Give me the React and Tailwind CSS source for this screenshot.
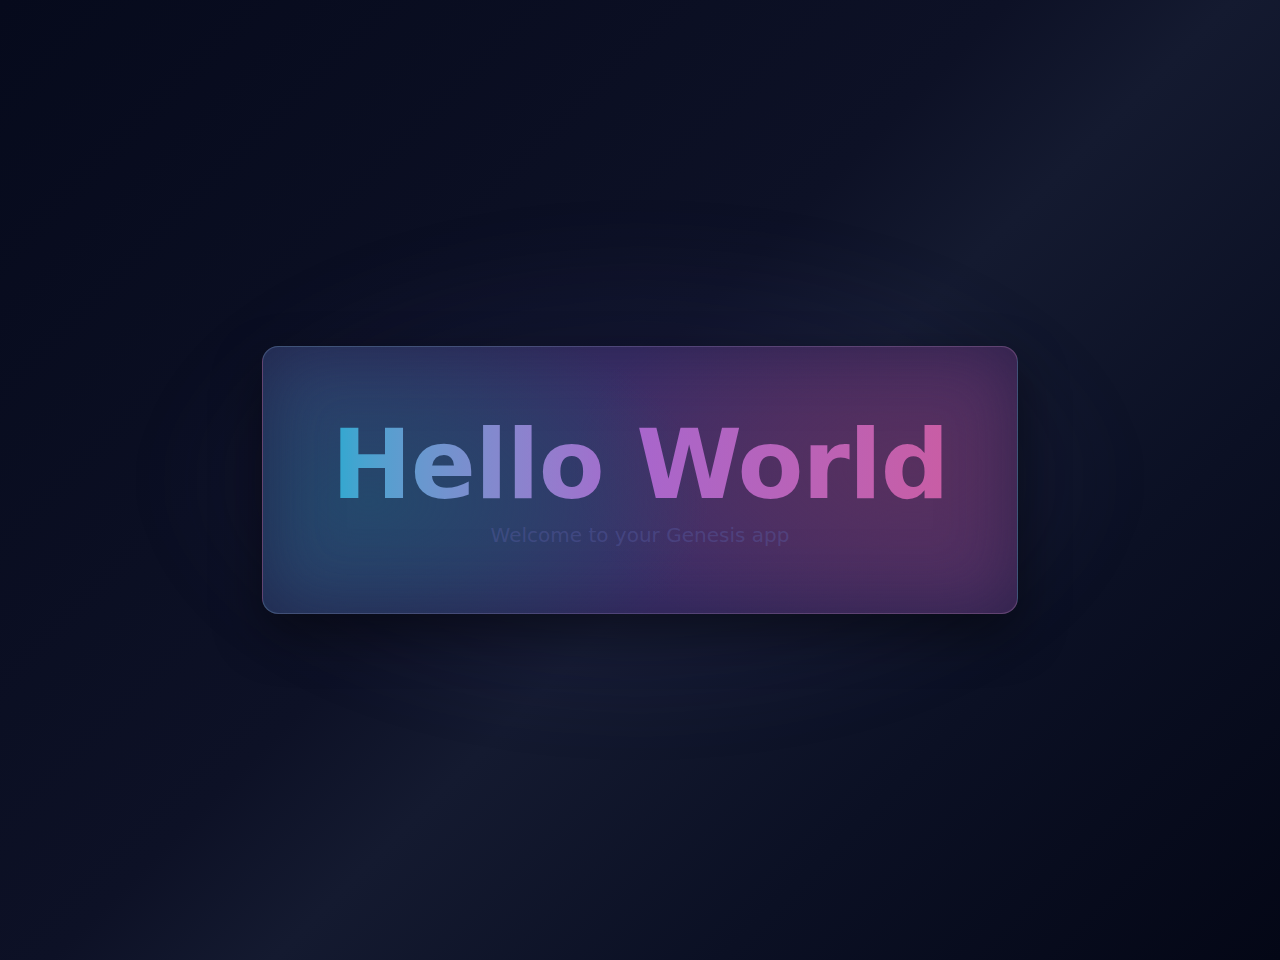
import React from 'react';

function App() {
    return (
        <div
            className="min-h-screen w-full flex items-center justify-center bg-[linear-gradient(135deg,#060a1c_0%,#0d1126_45%,#141a30_55%,#0b1024_75%,#040716_100%)]"
            style={{ fontFamily: '"DejaVu Sans", Verdana, sans-serif' }}
        >
            <div className="relative">
                {/* soft halo behind the card */}
                <div className="absolute -inset-x-[100px] -inset-y-[115px] rounded-[50%] bg-[radial-gradient(ellipse_at_center,rgba(60,60,130,0.2),rgba(40,40,90,0.1)_55%,transparent_72%)] blur-xl" />

                <div className="relative w-[756px] h-[268px] rounded-2xl border border-white/10 overflow-hidden shadow-[0_20px_50px_rgba(0,0,0,0.45)] bg-[radial-gradient(ellipse_45%_75%_at_14%_58%,#24486c_0%,rgba(36,72,108,0.6)_45%,transparent_100%),radial-gradient(ellipse_45%_75%_at_86%_45%,#57305f_0%,rgba(87,48,95,0.6)_45%,transparent_100%),linear-gradient(90deg,#2e3a66,#3d2f6a_50%,#4a2e62)]">
                    <div className="absolute inset-0 rounded-2xl shadow-[inset_0_0_70px_rgba(25,25,60,0.6)]" />
                    <div className="relative flex flex-col items-center pt-[70px]">
                        <h1 className="text-8xl font-bold leading-none tracking-[-1px] bg-gradient-to-r from-[#2aa9d0] via-[#a866cc] to-[#c95da4] bg-clip-text text-transparent">
                            Hello World
                        </h1>
                        <p className="mt-[8px] text-xl leading-7 text-[#5a5fa8]/40">
                            Welcome to your Genesis app
                        </p>
                    </div>
                </div>
            </div>
        </div>
    );
}

export default App;
